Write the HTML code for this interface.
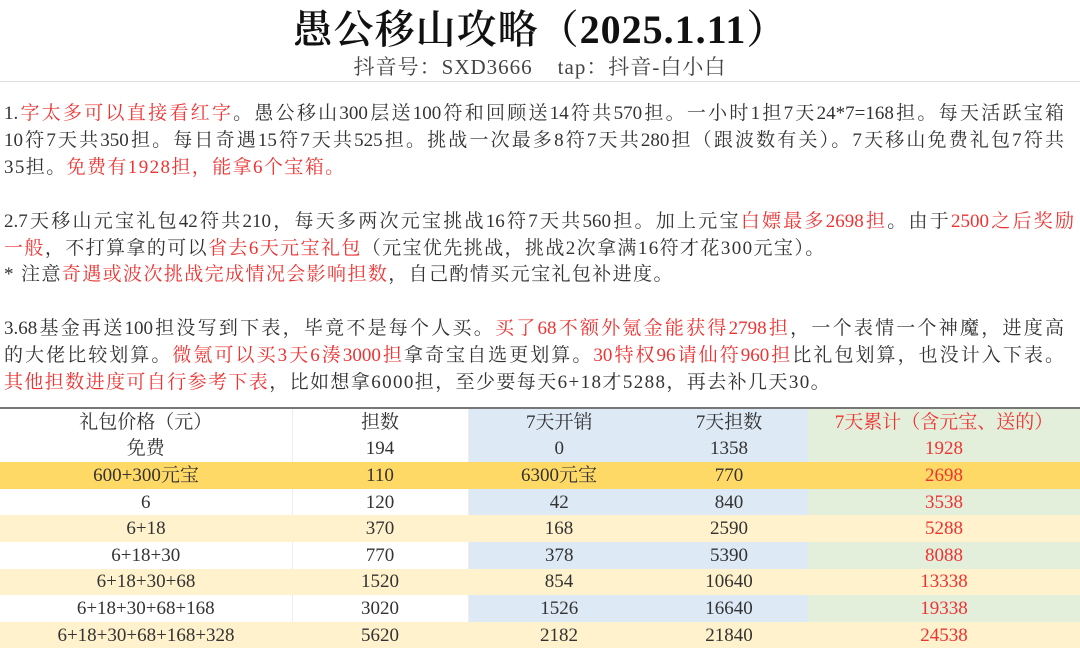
<!DOCTYPE html>
<html><head><meta charset="utf-8"><style>
body{margin:0;width:1080px;height:647px;overflow:hidden;background:#fff;font-family:"Liberation Serif","Noto Serif CJK SC",serif;color:#333;position:relative}
.t{position:absolute;left:0;width:1080px;text-align:center;top:7px;font-size:40px;font-weight:600;color:#111;line-height:46px;letter-spacing:1px}
.s{position:absolute;left:0;width:1080px;text-align:center;top:55px;font-size:21px;line-height:24px;color:#444;letter-spacing:1px}
.hr{position:absolute;left:0;width:1080px;top:81px;height:1px;background:#ddd}
.l{position:absolute;left:4px;width:1060px;font-size:19px;line-height:27px;white-space:nowrap;letter-spacing:1.4px}
.j{text-align:justify;text-align-last:justify;letter-spacing:0}
.r{color:#ee3333}
table{position:absolute;left:0;top:407px;border-collapse:collapse;width:1080px;border-top:2px solid #777;font-size:19px;table-layout:fixed}
td{height:26.6px;padding:0;text-align:center;line-height:25px;color:#333}
.w td:nth-child(1),.w td:nth-child(2){background:#fff;border-right:1px solid #eee}
.w td:nth-child(3),.w td:nth-child(4){background:#dde9f5}
.w td:nth-child(5){background:#e3efdb}
.c td{background:#fff2cc}
.o td{background:#ffd966}
td:nth-child(5){color:#ee3333}
</style></head><body>
<div class="t">愚公移山攻略（2025.1.11）</div>
<div class="s">抖音号：SXD3666&nbsp;&nbsp;&nbsp;&nbsp;tap：抖音-白小白</div>
<div class="hr"></div>
<div class="l j" style="top:100px">1.<span class="r">字太多可以直接看红字</span>。愚公移山300层送100符和回顾送14符共570担。一小时1担7天24*7=168担。每天活跃宝箱</div>
<div class="l j" style="top:127px">10符7天共350担。每日奇遇15符7天共525担。挑战一次最多8符7天共280担（跟波数有关）。7天移山免费礼包7符共</div>
<div class="l" style="top:154px">35担。<span class="r">免费有1928担，能拿6个宝箱。</span></div>
<div class="l j" style="top:208px;width:1070px">2.7天移山元宝礼包42符共210，每天多两次元宝挑战16符7天共560担。加上元宝<span class="r">白嫖最多2698担</span>。由于<span class="r">2500之后奖励</span></div>
<div class="l" style="top:235px"><span class="r">一般</span>，不打算拿的可以<span class="r">省去6天元宝礼包</span>（元宝优先挑战，挑战2次拿满16符才花300元宝）。</div>
<div class="l" style="top:261px">* 注意<span class="r">奇遇或波次挑战完成情况会影响担数</span>，自己酌情买元宝礼包补进度。</div>
<div class="l j" style="top:315px">3.68基金再送100担没写到下表，毕竟不是每个人买。<span class="r">买了68不额外氪金能获得2798担</span>，一个表情一个神魔，进度高</div>
<div class="l j" style="top:342px">的大佬比较划算。<span class="r">微氪可以买3天6湊3000担</span>拿奇宝自选更划算。<span class="r">30特权96请仙符960担</span>比礼包划算，也没计入下表。</div>
<div class="l" style="top:369px"><span class="r">其他担数进度可自行参考下表</span>，比如想拿6000担，至少要每天6+18才5288，再去补几天30。</div>
<table>
<colgroup><col style="width:292px"><col style="width:176px"><col style="width:182px"><col style="width:158px"><col style="width:272px"></colgroup>
<tr class="w"><td>礼包价格（元）</td><td>担数</td><td>7天开销</td><td>7天担数</td><td>7天累计（含元宝、送的）</td></tr>
<tr class="w"><td>免费</td><td>194</td><td>0</td><td>1358</td><td>1928</td></tr>
<tr class="o"><td>600+300元宝</td><td>110</td><td>6300元宝</td><td>770</td><td>2698</td></tr>
<tr class="w"><td>6</td><td>120</td><td>42</td><td>840</td><td>3538</td></tr>
<tr class="c"><td>6+18</td><td>370</td><td>168</td><td>2590</td><td>5288</td></tr>
<tr class="w"><td>6+18+30</td><td>770</td><td>378</td><td>5390</td><td>8088</td></tr>
<tr class="c"><td>6+18+30+68</td><td>1520</td><td>854</td><td>10640</td><td>13338</td></tr>
<tr class="w"><td>6+18+30+68+168</td><td>3020</td><td>1526</td><td>16640</td><td>19338</td></tr>
<tr class="c"><td>6+18+30+68+168+328</td><td>5620</td><td>2182</td><td>21840</td><td>24538</td></tr>
</table>
</body></html>
